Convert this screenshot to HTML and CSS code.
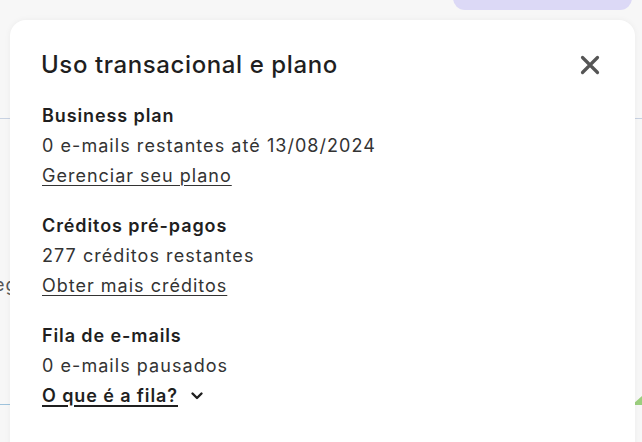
FILE: index.html
```html
<!DOCTYPE html>
<html lang="pt-BR">
<head>
<meta charset="utf-8">
<link rel="stylesheet" href="styles.css">
</head>
<body>
<div class="page">
  <div class="pill"></div>
  <div class="rule rule-top"></div>
  <div class="behind-text">eg</div>
  <div class="rule rule-bottom"></div>
  <div class="green"></div>

  <section class="popover">
    <header class="head">
      <h2 class="title">Uso transacional e plano</h2>
      <button class="close" aria-label="Fechar">
        <svg width="20" height="20" viewBox="0 0 20 20"><path d="M2.5 2.5 L17.5 17.5 M17.5 2.5 L2.5 17.5" stroke="#555" stroke-width="3.2" stroke-linecap="round"/></svg>
      </button>
    </header>

    <div class="group">
      <div class="label">Business plan</div>
      <div class="value">0 e-mails restantes até 13/08/2024</div>
      <a class="link" href="#">Gerenciar seu plano</a>
    </div>

    <div class="group">
      <div class="label">Créditos pré-pagos</div>
      <div class="value">277 créditos restantes</div>
      <a class="link" href="#">Obter mais créditos</a>
    </div>

    <div class="group">
      <div class="label">Fila de e-mails</div>
      <div class="value">0 e-mails pausados</div>
      <div class="toggle">
        <a class="link strong" href="#">O que é a fila?</a>
        <svg class="chev" width="14" height="10" viewBox="0 0 14 10"><path d="M2.5 2.5 L7 7 L11.5 2.5" fill="none" stroke="#1f1f1f" stroke-width="2.4" stroke-linecap="round" stroke-linejoin="round"/></svg>
      </div>
    </div>
  </section>
</div>
</body>
</html>
```

FILE: styles.css
```css
* { box-sizing: border-box; }
html, body { margin: 0; padding: 0; }
body {
  width: 642px;
  height: 442px;
  overflow: hidden;
  background: #f7f7f7;
  font-family: Inter, "Noto Sans", sans-serif;
  color: #1f1f1f;
}
.page {
  position: relative;
  width: 642px;
  height: 442px;
}
.pill {
  position: absolute;
  left: 453px;
  top: -20px;
  width: 179px;
  height: 30px;
  border-radius: 12px;
  background: #dcd9f6;
}
.rule {
  position: absolute;
  left: 0;
  right: 0;
  height: 1px;
  background: #c8d2e2;
}
.rule-top { top: 118px; }
.rule-bottom { top: 404px; background: #9fc3dc; }
.behind-text {
  position: absolute;
  left: -6px;
  top: 274px;
  font-size: 18px;
  letter-spacing: 0.9px;
  color: #555;
}
.green {
  position: absolute;
  left: 632px;
  top: 396px;
  width: 0;
  height: 0;
  border-left: 10px solid transparent;
  border-bottom: 9px solid #9ccf7e;
}
.popover {
  position: absolute;
  left: 10px;
  top: 20px;
  width: 625px;
  height: 440px;
  background: #fff;
  border-radius: 16px;
  box-shadow: 0 0 6px rgba(0,0,0,0.05);
  padding: 28px 32px 0 31px;
}
.head {
  display: flex;
  align-items: center;
  justify-content: space-between;
  margin-bottom: 19px;
}
.title {
  margin: 0;
  font-size: 24px;
  font-weight: 500;
  line-height: 34px;
  color: #1f1f1f;
  letter-spacing: 0.6px;
}
.close {
  border: 0;
  background: none;
  padding: 0;
  width: 20px;
  height: 20px;
  margin-right: 3px;
  display: flex;
}
.group {
  display: flex;
  flex-direction: column;
  align-items: flex-start;
  margin-bottom: 20px;
  padding-left: 1px;
}
.label {
  font-size: 18px;
  font-weight: 600;
  line-height: 30px;
  letter-spacing: 0.9px;
  color: #1f1f1f;
}
.value {
  font-size: 18px;
  font-weight: 400;
  line-height: 30px;
  letter-spacing: 1.05px;
  color: #333;
}
.link {
  font-size: 18px;
  line-height: 30px;
  letter-spacing: 1px;
  color: #333;
  text-decoration: underline;
  text-underline-offset: 3px;
  text-decoration-thickness: 1px;
}
.link.strong {
  font-weight: 600;
  letter-spacing: 0.9px;
  color: #1f1f1f;
  text-decoration-thickness: 2px;
}
.toggle {
  display: flex;
  align-items: center;
  gap: 12px;
}
.chev { display: block; }
```
